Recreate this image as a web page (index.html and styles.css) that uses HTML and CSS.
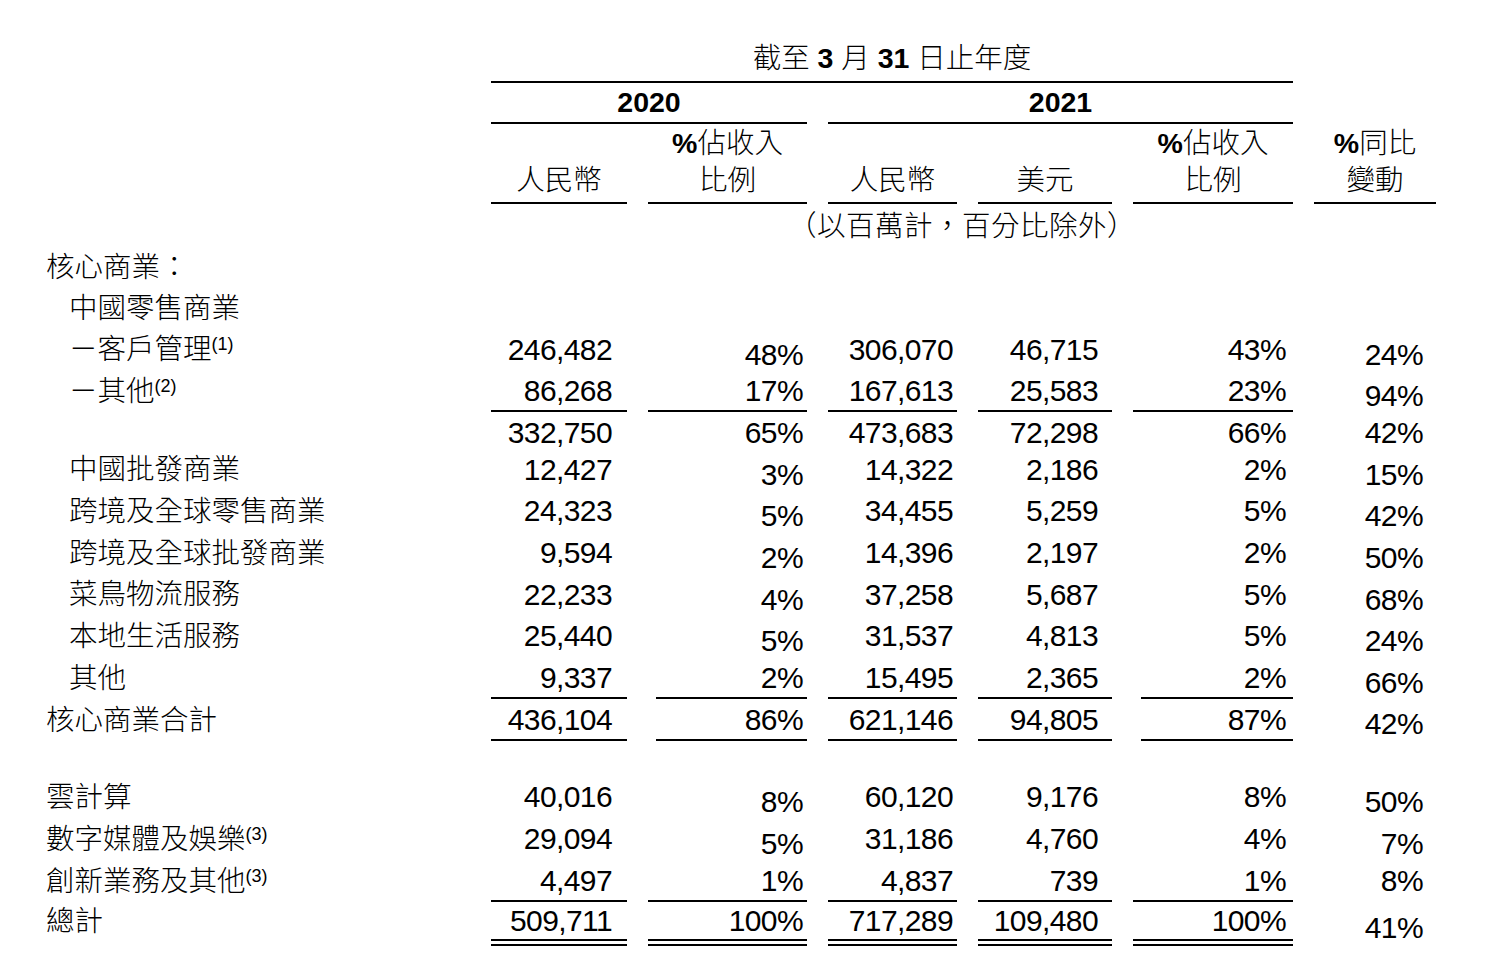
FILE: index.html
```html
<!DOCTYPE html>
<html lang="zh-Hant">
<head>
<meta charset="utf-8">
<title>收入明細</title>
<link rel="stylesheet" href="styles.css">
</head>
<body>
<div class="sheet">
  <div class="row r-title"><div class="title ul">截至 <b>3</b> 月 <b>31</b> 日止年度</div></div>
  <div class="row r-year"><div class="y2020 ul">2020</div><div class="y2021 ul">2021</div></div>
  <div class="row r-head">
    <div class="hc c1 ul"><span>人民幣</span></div>
    <div class="hc ul"><span><b>%</b>佔收入</span><span>比例</span></div>
    <div class="hc ul"><span>人民幣</span></div>
    <div class="hc ul"><span>美元</span></div>
    <div class="hc ul"><span><b>%</b>佔收入</span><span>比例</span></div>
    <div class="hc ul"><span><b>%</b>同比</span><span>變動</span></div>
  </div>
  <div class="row r-note"><div class="note">（以百萬計，百分比除外）</div></div>

  <div class="row"><div class="lab">核心商業：</div></div>
  <div class="row h41"><div class="lab sub">中國零售商業</div></div>
  <div class="row h41">
    <div class="lab sub">－客戶管理<sup>(1)</sup></div>
    <div class="n1">246,482</div><div class="p1 dn">48%</div><div class="n2">306,070</div><div class="n3">46,715</div><div class="p2">43%</div><div class="yy dn">24%</div>
  </div>
  <div class="row">
    <div class="lab sub">－其他<sup>(2)</sup></div>
    <div class="n1 ul">86,268</div><div class="p1 ul">17%</div><div class="n2 ul">167,613</div><div class="n3 ul">25,583</div><div class="p2 ul">23%</div><div class="yy dn">94%</div>
  </div>
  <div class="row h37">
    <div class="lab"></div>
    <div class="n1">332,750</div><div class="p1">65%</div><div class="n2">473,683</div><div class="n3">72,298</div><div class="p2">66%</div><div class="yy">42%</div>
  </div>
  <div class="row h41">
    <div class="lab sub">中國批發商業</div>
    <div class="n1">12,427</div><div class="p1 dn">3%</div><div class="n2">14,322</div><div class="n3">2,186</div><div class="p2">2%</div><div class="yy dn">15%</div>
  </div>
  <div class="row">
    <div class="lab sub">跨境及全球零售商業</div>
    <div class="n1">24,323</div><div class="p1 dn">5%</div><div class="n2">34,455</div><div class="n3">5,259</div><div class="p2">5%</div><div class="yy dn">42%</div>
  </div>
  <div class="row">
    <div class="lab sub">跨境及全球批發商業</div>
    <div class="n1">9,594</div><div class="p1 dn">2%</div><div class="n2">14,396</div><div class="n3">2,197</div><div class="p2">2%</div><div class="yy dn">50%</div>
  </div>
  <div class="row h41">
    <div class="lab sub">菜鳥物流服務</div>
    <div class="n1">22,233</div><div class="p1 dn">4%</div><div class="n2">37,258</div><div class="n3">5,687</div><div class="p2">5%</div><div class="yy dn">68%</div>
  </div>
  <div class="row">
    <div class="lab sub">本地生活服務</div>
    <div class="n1">25,440</div><div class="p1 dn">5%</div><div class="n2">31,537</div><div class="n3">4,813</div><div class="p2">5%</div><div class="yy dn">24%</div>
  </div>
  <div class="row">
    <div class="lab sub">其他</div>
    <div class="n1 ul">9,337</div><div class="p1 ul nar">2%</div><div class="n2 ul">15,495</div><div class="n3 ul">2,365</div><div class="p2 ul nar">2%</div><div class="yy dn">66%</div>
  </div>
  <div class="row">
    <div class="lab">核心商業合計</div>
    <div class="n1 ul">436,104</div><div class="p1 ul nar">86%</div><div class="n2 ul">621,146</div><div class="n3 ul">94,805</div><div class="p2 ul nar">87%</div><div class="yy dn4">42%</div>
  </div>
  <div class="spacer"></div>
  <div class="row">
    <div class="lab">雲計算</div>
    <div class="n1">40,016</div><div class="p1 dn">8%</div><div class="n2">60,120</div><div class="n3">9,176</div><div class="p2">8%</div><div class="yy dn">50%</div>
  </div>
  <div class="row">
    <div class="lab">數字媒體及娛樂<sup>(3)</sup></div>
    <div class="n1">29,094</div><div class="p1 dn">5%</div><div class="n2">31,186</div><div class="n3">4,760</div><div class="p2">4%</div><div class="yy dn">7%</div>
  </div>
  <div class="row">
    <div class="lab">創新業務及其他<sup>(3)</sup></div>
    <div class="n1 ul">4,497</div><div class="p1 ul">1%</div><div class="n2 ul">4,837</div><div class="n3 ul">739</div><div class="p2 ul">1%</div><div class="yy">8%</div>
  </div>
  <div class="row r-total">
    <div class="lab">總計</div>
    <div class="n1 dbl">509,711</div><div class="p1 dbl">100%</div><div class="n2 dbl">717,289</div><div class="n3 dbl">109,480</div><div class="p2 dbl">100%</div><div class="yy dn7">41%</div>
  </div>
</div>
</body>
</html>
```

FILE: styles.css
```css
html, body {
  margin: 0;
  padding: 0;
  background: #fff;
}

body {
  color: #000;
  font-family: "Liberation Sans", "Noto Sans CJK TC", sans-serif;
  font-size: 28.5px;
  font-weight: 300;
}

b {
  font-weight: 700;
}

.sheet {
  padding-top: 35px;
  width: 1486px;
}

.row {
  display: grid;
  grid-template-columns: 470px 136px 159px 129px 134px 160px 122px;
  grid-template-rows: minmax(0, 1fr);
  column-gap: 21px;
  height: 42px;
  line-height: 42px;
}

.row > div {
  box-sizing: border-box;
  white-space: nowrap;
  text-align: right;
  min-height: 0;
}

.h41 {
  height: 41px;
  line-height: 41px;
}

.h37 {
  height: 37px;
}

.ul {
  border-bottom: 2px solid #000;
}

.dbl {
  border-bottom: 7px double #000;
}

.nar {
  margin-left: 8px;
}

/* header */
.r-title {
  height: 48px;
  line-height: 46px;
}

.row > .title {
  grid-column: 2 / 7;
  text-align: center;
}

.r-year {
  height: 41px;
  line-height: 38px;
}

.row > .y2020 {
  grid-column: 2 / 4;
  text-align: center;
  font-weight: 700;
}

.row > .y2021 {
  grid-column: 4 / 7;
  text-align: center;
  font-weight: 700;
}

.r-head {
  height: 80px;
  line-height: 37px;
}

.row > .hc {
  display: flex;
  flex-direction: column;
  justify-content: flex-end;
  align-items: center;
  padding-bottom: 3px;
  text-align: center;
}

.row > .c1 {
  grid-column: 2;
}

.r-note {
  line-height: 44px;
}

.row > .note {
  grid-column: 3 / 7;
  text-align: left;
  padding-left: 140px;
  letter-spacing: 0.5px;
}

/* body cells */
.row > .lab {
  grid-column: 1;
  text-align: left;
  padding-left: 46px;
}

.row > .lab.sub {
  padding-left: 69px;
}

.lab sup {
  font-size: 18px;
  line-height: 1;
  vertical-align: 9px;
  font-weight: 400;
}

.n1, .p1, .n2, .n3, .p2, .yy {
  font-size: 30px;
  letter-spacing: -0.6px;
}

.n1 { grid-column: 2; padding-right: 15px; }
.p1 { grid-column: 3; padding-right: 4px; }
.n2 { grid-column: 4; padding-right: 4px; }
.n3 { grid-column: 5; padding-right: 14px; }
.p2 { grid-column: 6; padding-right: 7px; }
.yy { grid-column: 7; padding-right: 13px; }

.row > .dn { padding-top: 5px; }
.row > .dn4 { padding-top: 4px; }
.row > .dn7 { padding-top: 7px; }

.spacer {
  height: 35px;
}

.r-total {
  height: 44px;
  line-height: 38px;
}
```
